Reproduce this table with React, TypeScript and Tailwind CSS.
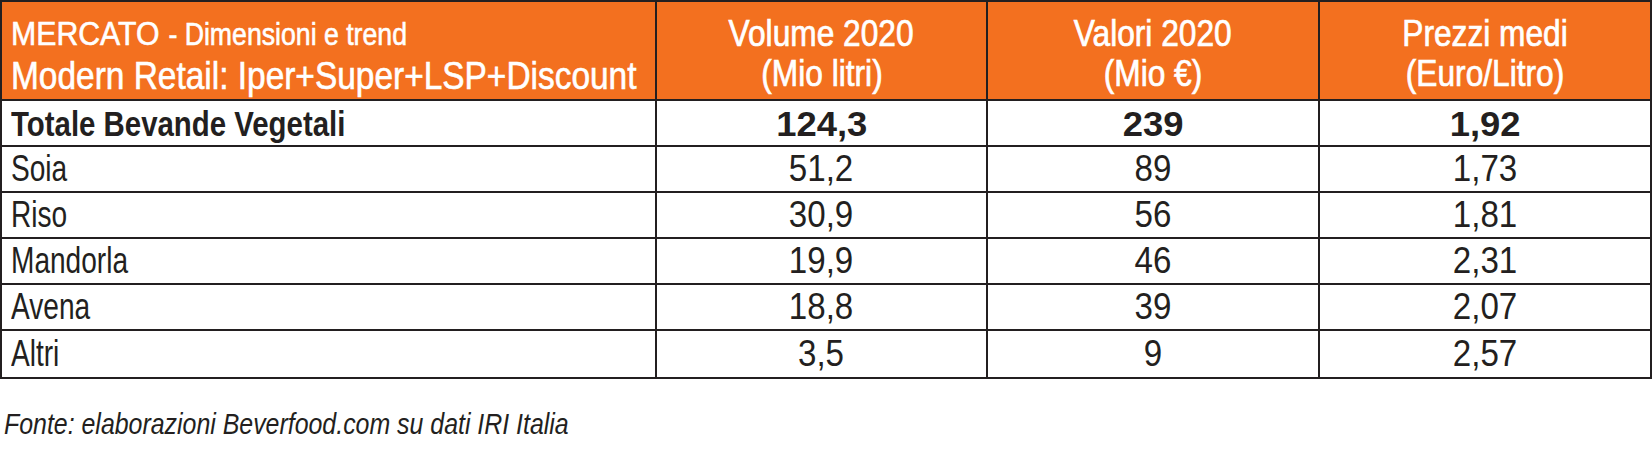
import React from "react";

const rows: [string, string, string, string][] = [
  ["Soia", "51,2", "89", "1,73"],
  ["Riso", "30,9", "56", "1,81"],
  ["Mandorla", "19,9", "46", "2,31"],
  ["Avena", "18,8", "39", "2,07"],
  ["Altri", "3,5", "9", "2,57"],
];

const grid = "grid grid-cols-[655px_331px_332px_330px]";

function HeadNum({ a, b }: { a: string; b: string }) {
  return (
    <div className="flex flex-col items-center justify-center text-white text-[36px] leading-[40px] border-r-2 border-[#231f20] last:border-r-0 pt-[4px] [-webkit-text-stroke:0.7px_#fff]">
      <span className="inline-block scale-x-[0.88] origin-center whitespace-nowrap">{a}</span>
      <span className="inline-block scale-x-[0.88] origin-center whitespace-nowrap">{b}</span>
    </div>
  );
}

function Num({ v, bold }: { v: string; bold?: boolean }) {
  return (
    <div className="flex items-center justify-center border-r-2 border-[#231f20] last:border-r-0">
      <span
        className={
          bold
            ? "inline-block text-[35px] leading-[35px] font-bold scale-x-[1.04] origin-center"
            : "inline-block text-[36px] leading-[36px] scale-x-[0.92] origin-center"
        }
      >
        {v}
      </span>
    </div>
  );
}

export default function App() {
  return (
    <div className="w-[1652px] h-[452px] bg-white text-[#231f20] font-[family-name:'Liberation_Sans',Arial,sans-serif] overflow-hidden">
      <div className="w-[1652px] border-2 border-[#231f20]">
        <div className={`${grid} h-[99px] bg-[#f3701f] border-b-2 border-[#231f20]`}>
          <div className="flex flex-col justify-start pl-[9px] pt-[12px] text-white border-r-2 border-[#231f20] [-webkit-text-stroke:0.6px_#fff]">
            <div className="whitespace-nowrap leading-[38px]">
              <span className="inline-block text-[34px] scale-x-[0.89] origin-left">MERCATO</span>
              <span className="inline-block text-[31px] scale-x-[0.86] origin-left -ml-[17px]">&nbsp;- Dimensioni e trend</span>
            </div>
            <div className="whitespace-nowrap leading-[34px]">
              <span className="inline-block text-[38px] scale-x-[0.88] origin-left">
                Modern Retail: Iper+Super+LSP+Discount
              </span>
            </div>
          </div>
          <HeadNum a="Volume 2020" b="(Mio litri)" />
          <HeadNum a="Valori 2020" b="(Mio €)" />
          <HeadNum a="Prezzi medi" b="(Euro/Litro)" />
        </div>
        <div className={`${grid} h-[46px] border-b-2 border-[#231f20]`}>
          <div className="flex items-center pl-[9px] border-r-2 border-[#231f20]">
            <span className="inline-block text-[35px] leading-[35px] font-bold scale-x-[0.84] origin-left whitespace-nowrap">
              Totale Bevande Vegetali
            </span>
          </div>
          <Num v="124,3" bold />
          <Num v="239" bold />
          <Num v="1,92" bold />
        </div>
        {rows.map((r, i) => (
          <div
            key={r[0]}
            className={`${grid} h-[46px] ${i < rows.length - 1 ? "border-b-2 border-[#231f20]" : ""}`}
          >
            <div className="flex items-center pl-[9px] border-r-2 border-[#231f20]">
              <span className="inline-block text-[36px] leading-[36px] scale-x-[0.78] origin-left whitespace-nowrap">
                {r[0]}
              </span>
            </div>
            <Num v={r[1]} />
            <Num v={r[2]} />
            <Num v={r[3]} />
          </div>
        ))}
      </div>
      <div className="mt-[30px] pl-[4px] leading-[30px]">
        <span className="inline-block italic text-[30px] scale-x-[0.83] origin-left whitespace-nowrap">
          Fonte: elaborazioni Beverfood.com su dati IRI Italia
        </span>
      </div>
    </div>
  );
}
